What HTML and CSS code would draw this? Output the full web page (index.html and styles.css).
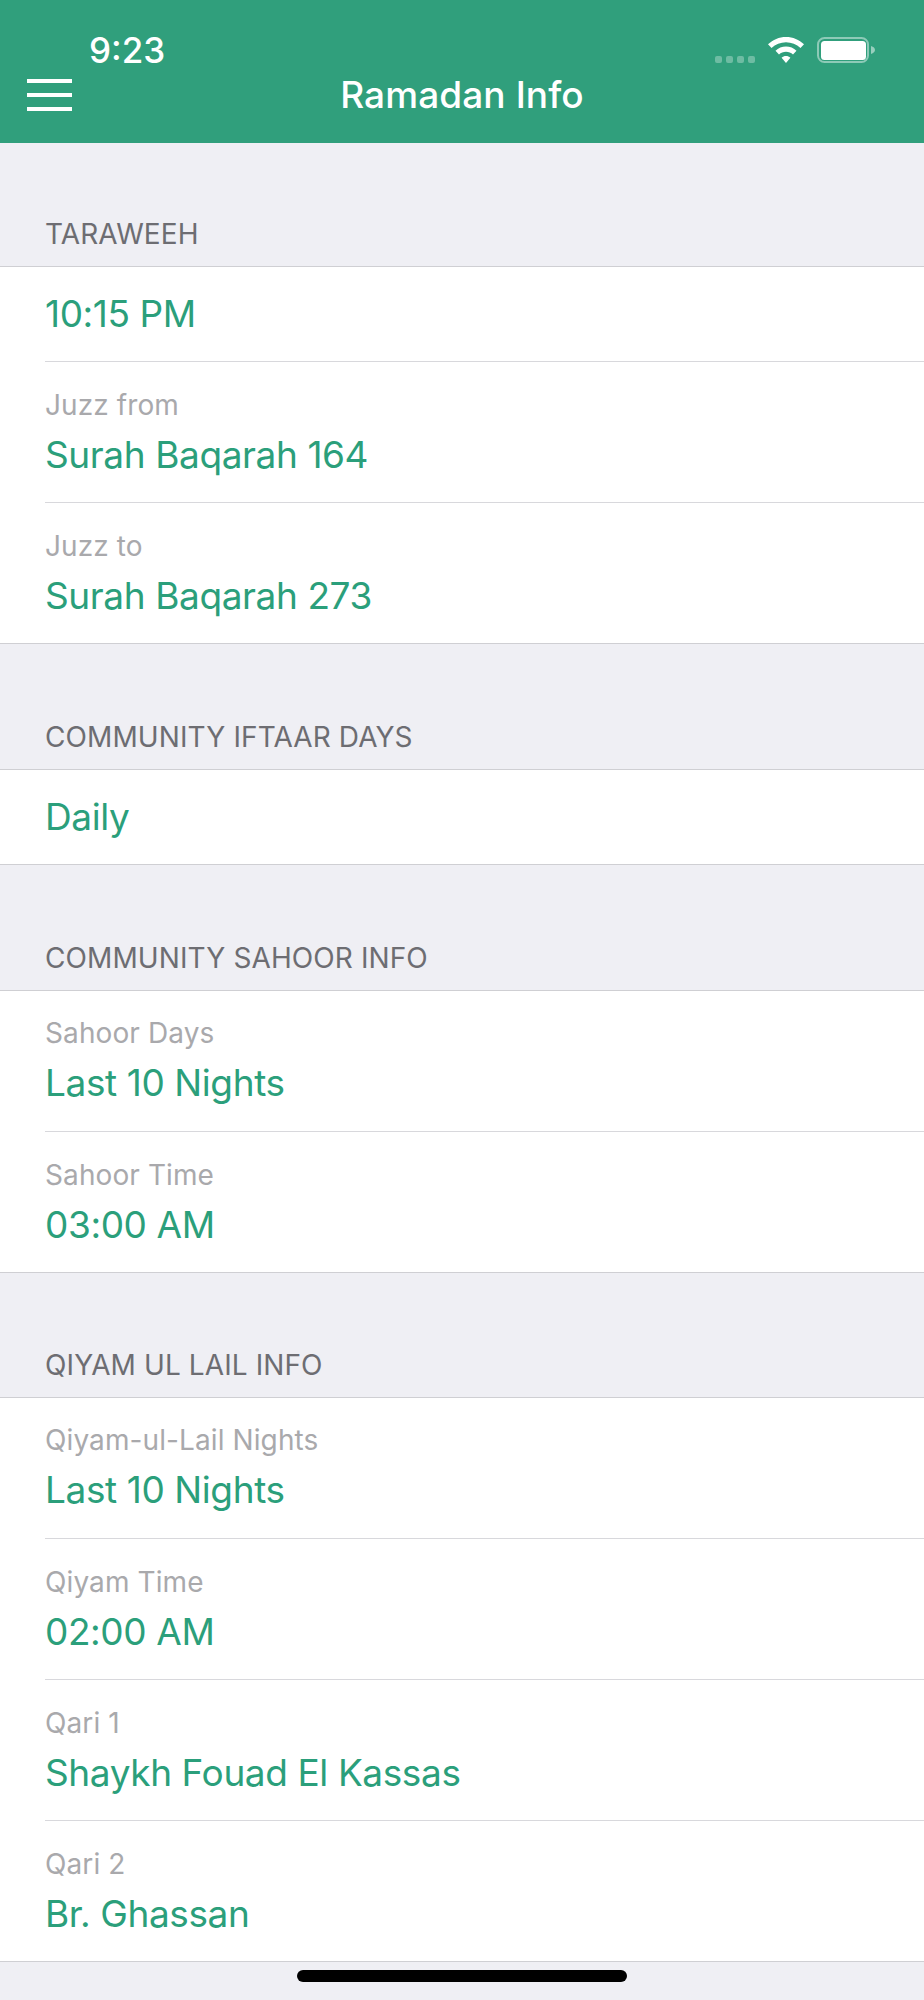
FILE: index.html
```html
<!DOCTYPE html>
<html lang="en">
<head>
<meta charset="utf-8">
<title>Ramadan Info</title>
<link rel="stylesheet" href="styles.css">
</head>
<body>
<header class="header">
  <div class="status">
    <span class="time">9:23</span>
    <div class="status-icons">
      <div class="signal"><i></i><i></i><i></i><i></i></div>
      <svg class="wifi" width="36" height="26" viewBox="0 0 36 26"><path d="M18 0C11 0 5 2.700 0 7.300L3.500 11C7.500 7.300 12.500 5.200 18 5.200S28.500 7.300 32.500 11L36 7.300C31 2.700 25 0 18 0Z" fill="#fff"/><path d="M18 9.500C14 9.500 10.300 11.100 7.500 13.700L11 17.400C12.900 15.700 15.300 14.700 18 14.700S23.100 15.700 25 17.400L28.500 13.700C25.700 11.100 22 9.500 18 9.500Z" fill="#fff"/><path d="M18 19C16.300 19 14.800 19.600 13.600 20.700L18 26L22.400 20.700C21.200 19.600 19.700 19 18 19Z" fill="#fff"/></svg>
      <svg class="battery" width="59" height="26" viewBox="0 0 59 26"><rect x="1" y="1" width="50" height="24" rx="6.500" fill="none" stroke="#fff" stroke-opacity=".45" stroke-width="2"/><rect x="4" y="4" width="45" height="19" rx="3.500" fill="#fff"/><path d="M54 9C56.500 9.800 58 11.200 58 13S56.500 16.200 54 17Z" fill="#fff" fill-opacity=".5"/></svg>
    </div>
  </div>
  <div class="nav">
    <div class="menu"><i></i><i></i><i></i></div>
    <h1 class="title">Ramadan Info</h1>
    <div></div>
  </div>
</header>
<main>
  <section class="group">
    <h2 class="group-title">TARAWEEH</h2>
    <ul class="list">
      <li class="row"><span class="value">10:15 PM</span></li>
      <li class="row"><span class="label">Juzz from</span><span class="value">Surah Baqarah 164</span></li>
      <li class="row"><span class="label">Juzz to</span><span class="value">Surah Baqarah 273</span></li>
    </ul>
  </section>
  <section class="group">
    <h2 class="group-title">COMMUNITY IFTAAR DAYS</h2>
    <ul class="list">
      <li class="row"><span class="value">Daily</span></li>
    </ul>
  </section>
  <section class="group">
    <h2 class="group-title">COMMUNITY SAHOOR INFO</h2>
    <ul class="list">
      <li class="row"><span class="label">Sahoor Days</span><span class="value">Last 10 Nights</span></li>
      <li class="row"><span class="label">Sahoor Time</span><span class="value">03:00 AM</span></li>
    </ul>
  </section>
  <section class="group">
    <h2 class="group-title">QIYAM UL LAIL INFO</h2>
    <ul class="list">
      <li class="row"><span class="label">Qiyam-ul-Lail Nights</span><span class="value">Last 10 Nights</span></li>
      <li class="row"><span class="label">Qiyam Time</span><span class="value">02:00 AM</span></li>
      <li class="row"><span class="label">Qari 1</span><span class="value">Shaykh Fouad El Kassas</span></li>
      <li class="row"><span class="label">Qari 2</span><span class="value">Br. Ghassan</span></li>
    </ul>
  </section>
</main>
<div class="home-indicator"></div>
</body>
</html>
```
FILE: styles.css
```css
* { box-sizing: border-box; }
html, body { margin: 0; padding: 0; }
body {
  height: 2000px;
  overflow: hidden;
  position: relative;
  background: #efeff4;
  font-family: "Inter", "Liberation Sans", sans-serif;
}
.header {
  height: 143px;
  background: #309f7c;
  color: #fff;
  padding-top: 37px;
}
.status {
  display: flex;
  justify-content: space-between;
  height: 26px;
  padding: 0 48px 0 89px;
}
.time { font-size: 35px; line-height: 26px; font-weight: 500; }
.status-icons { display: flex; align-items: flex-start; }
.signal { display: flex; gap: 4px; margin-top: 19px; margin-right: 13px; }
.signal i { width: 7px; height: 7px; border-radius: 2px; background: rgba(255,255,255,.3); }
.wifi { display: block; margin-right: 13px; }
.battery { display: block; }
.nav {
  display: grid;
  grid-template-columns: 1fr auto 1fr;
  align-items: center;
  padding-top: 15px;
}
.menu { display: flex; flex-direction: column; gap: 10px; width: 45px; margin-left: 27px; }
.menu i { height: 4px; background: #fff; }
.title { margin: 0; font-size: 37px; line-height: 34px; font-weight: 500; letter-spacing: 0.1px; }
.group-title {
  margin: 0;
  height: 123px;
  padding: 76px 0 0 45px;
  font-size: 28px;
  line-height: 30px;
  letter-spacing: 0.1px;
  font-weight: 400;
  color: #6d6d72;
}
.group + .group .group-title { height: 125px; padding-top: 78px; }
.group:last-child .group-title { height: 124px; padding-top: 77px; }
.list {
  list-style: none;
  margin: 0;
  padding: 0 0 0 45px;
  background: #fff;
  border-top: 1px solid #cfcfd3;
  border-bottom: 1px solid #cfcfd3;
}
.row {
  display: flex;
  flex-direction: column;
  justify-content: center;
  min-height: 94px;
  padding: 0;
  border-top: 1px solid #d8d8dc;
}
.row:first-child { border-top: 0; }
.row:has(.label) { height: 141px; justify-content: flex-start; padding-top: 27px; }
.row:first-child:has(.label) { height: 140px; padding-top: 26px; }
.label {
  font-size: 28px;
  line-height: 32px;
  letter-spacing: 0.1px;
  color: #a9a9ac;
  margin-bottom: 12px;
}
.value {
  font-size: 37px;
  line-height: 44px;
  letter-spacing: -0.4px;
  color: #2b9f7b;
}
.home-indicator {
  position: absolute;
  left: 297px;
  top: 1970px;
  width: 330px;
  height: 12px;
  border-radius: 6px;
  background: #000;
}
```
